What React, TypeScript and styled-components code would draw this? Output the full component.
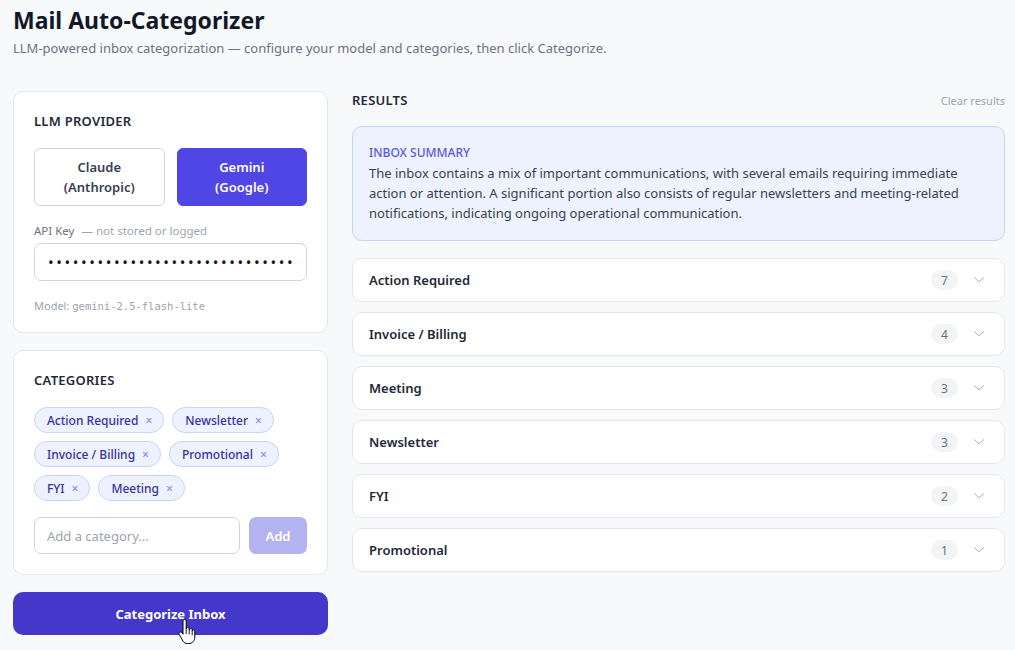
import { useState } from "react";
import styled, { createGlobalStyle } from "styled-components";

const GlobalStyle = createGlobalStyle`
  * { box-sizing: border-box; }
  html, body {
    margin: 0;
    padding: 0;
    background: #f8f9fb;
    font-family: "Noto Sans", "Open Sans", sans-serif;
    color: #111827;
  }
`;

const categories = [
  "Action Required",
  "Newsletter",
  "Invoice / Billing",
  "Promotional",
  "FYI",
  "Meeting",
];

const results = [
  { name: "Action Required", count: 7 },
  { name: "Invoice / Billing", count: 4 },
  { name: "Meeting", count: 3 },
  { name: "Newsletter", count: 3 },
  { name: "FYI", count: 2 },
  { name: "Promotional", count: 1 },
];

function Chevron() {
  return (
    <svg width="14" height="14" viewBox="0 0 24 24" fill="none" stroke="#9ca3af" strokeWidth="1.5" strokeLinecap="round" strokeLinejoin="round">
      <path d="M4 8l8 7 8-7" />
    </svg>
  );
}

// the mouse pointer resting on the primary button
function HandCursor() {
  return (
    <svg width="18" height="26" viewBox="0 0 18 26">
      <path
        d="M5 2.2c0-1 .8-1.7 1.6-1.7S8.2 1.2 8.2 2.2V10c0-.9.7-1.5 1.5-1.5s1.5.6 1.5 1.5v1c0-.9.7-1.5 1.5-1.5s1.5.6 1.5 1.5v1.2c0-.9.6-1.4 1.3-1.4s1.3.5 1.3 1.4v5.8c0 3.6-2.3 6.5-5.8 6.5H9.4c-2 0-3.3-.8-4.4-2.3L1.3 15.6c-.6-.8-.4-1.8.4-2.3.7-.5 1.6-.3 2.2.4L5 15.2z"
        fill="#fff"
        stroke="#000"
        strokeWidth="1"
        strokeLinejoin="round"
      />
      <path d="M8.2 10v5M11.2 11v4.5M14.2 12.2v4" stroke="#000" strokeWidth="0.9" />
    </svg>
  );
}

export default function App() {
  const [provider, setProvider] = useState<"claude" | "gemini">("gemini");

  return (
    <>
      <GlobalStyle />
      <Page>
        <Header>
          <h1>Mail Auto-Categorizer</h1>
          <p>LLM-powered inbox categorization — configure your model and categories, then click Categorize.</p>
        </Header>
        <Columns>
          <Sidebar>
            <Card $bottom={19}>
              <CardTitle>LLM Provider</CardTitle>
              <ProviderRow>
                <ProviderButton $active={provider === "claude"} onClick={() => setProvider("claude")}>
                  Claude<br />(Anthropic)
                </ProviderButton>
                <ProviderButton $active={provider === "gemini"} onClick={() => setProvider("gemini")}>
                  Gemini<br />(Google)
                </ProviderButton>
              </ProviderRow>
              <FieldLabel>
                API Key <span>— not stored or logged</span>
              </FieldLabel>
              <KeyInput type="password" defaultValue="AIzaSyD-9tSrke72PouQMnMX-a7eZSW0jkFMBWY" />
              <ModelNote>
                Model: <code>gemini-2.5-flash-lite</code>
              </ModelNote>
            </Card>
            <Card $bottom={20}>
              <CardTitle>Categories</CardTitle>
              <ChipList>
                {categories.map((c) => (
                  <Chip key={c}>
                    {c}
                    <ChipRemove>×</ChipRemove>
                  </Chip>
                ))}
              </ChipList>
              <AddRow>
                <TextInput placeholder="Add a category..." />
                <AddButton disabled>Add</AddButton>
              </AddRow>
            </Card>
            <PrimaryButton>
              Categorize Inbox
              <CursorSpot>
                <HandCursor />
              </CursorSpot>
            </PrimaryButton>
          </Sidebar>
          <Results>
            <ResultsHeader>
              <CardTitle as="h2">Results</CardTitle>
              <ClearLink>Clear results</ClearLink>
            </ResultsHeader>
            <Summary>
              <SummaryTitle>Inbox Summary</SummaryTitle>
              <SummaryText>
                The inbox contains a mix of important communications, with several emails requiring immediate
                action or attention. A significant portion also consists of regular newsletters and meeting-related
                notifications, indicating ongoing operational communication.
              </SummaryText>
            </Summary>
            {results.map((r) => (
              <ResultRow key={r.name}>
                <ResultName>{r.name}</ResultName>
                <CountBadge>{r.count}</CountBadge>
                <Chevron />
              </ResultRow>
            ))}
          </Results>
        </Columns>
      </Page>
    </>
  );
}

const Page = styled.div`
  padding: 6px 10px 16px 13px;
`;

const Header = styled.header`
  margin-bottom: 34px;

  h1 {
    margin: 0;
    font-size: 23px;
    font-weight: 700;
    line-height: 28px;
    color: #111827;
  }

  p {
    margin: 5px 0 0;
    font-size: 13px;
    color: #6b7280;
  }
`;

const Columns = styled.div`
  display: grid;
  grid-template-columns: 315px 1fr;
  gap: 24px;
  align-items: start;
`;

const Sidebar = styled.div`
  display: flex;
  flex-direction: column;
  gap: 17px;
`;

const Card = styled.section<{ $bottom?: number }>`
  background: #fff;
  border: 1px solid #e5e7eb;
  border-radius: 10px;
  padding: 20px 20px ${(p) => p.$bottom ?? 20}px;
`;

const CardTitle = styled.h3`
  margin: 0 0 18px;
  font-size: 13px;
  font-weight: 600;
  text-transform: uppercase;
  letter-spacing: 0.02em;
  color: #1f2937;
`;

const ProviderRow = styled.div`
  display: grid;
  grid-template-columns: 1fr 1fr;
  gap: 12px;
  margin-bottom: 17px;
`;

const ProviderButton = styled.button<{ $active: boolean }>`
  height: 58px;
  border-radius: 6px;
  font-family: inherit;
  font-size: 13px;
  line-height: 20px;
  font-weight: 600;
  cursor: pointer;
  border: 1px solid ${(p) => (p.$active ? "#4f46e5" : "#d1d5db")};
  background: ${(p) => (p.$active ? "#4f46e5" : "#fff")};
  color: ${(p) => (p.$active ? "#fff" : "#374151")};
`;

const FieldLabel = styled.div`
  font-size: 11.5px;
  color: #6b7280;
  margin-bottom: 5px;

  span {
    color: #9ca3af;
    margin-left: 4px;
  }
`;

const TextInput = styled.input`
  width: 100%;
  height: 38px;
  padding: 0 12px;
  border: 1px solid #d1d5db;
  border-radius: 7px;
  font-family: inherit;
  font-size: 13px;
  color: #111827;
  background: #fff;

  &::placeholder {
    color: #9ca3af;
  }
`;

const KeyInput = styled(TextInput)`
  padding: 0 12px 0 13px;
  font-size: 15px;
  letter-spacing: 2.6px;
  color: #0f172a;
`;

const ModelNote = styled.div`
  margin-top: 17px;
  font-size: 11px;
  color: #9ca3af;

  code {
    font-family: "DejaVu Sans Mono", "Liberation Mono", monospace;
    font-size: 10.5px;
  }
`;

const ChipList = styled.div`
  display: flex;
  flex-wrap: wrap;
  gap: 8px 8px;
  margin-bottom: 16px;
`;

const Chip = styled.span`
  display: inline-flex;
  align-items: center;
  gap: 7px;
  height: 26px;
  padding: 0 11px 0 12px;
  border-radius: 999px;
  background: #eef2ff;
  border: 1px solid #c7d2fe;
  color: #3730a3;
  font-size: 12px;
  font-weight: 500;
`;

const ChipRemove = styled.span`
  color: #818cf8;
  font-size: 12px;
`;

const AddRow = styled.div`
  display: flex;
  gap: 9px;

  input {
    height: 37px;
  }
`;

const AddButton = styled.button`
  flex: 0 0 58px;
  height: 37px;
  border: none;
  border-radius: 7px;
  background: #b4b3f2;
  color: #fff;
  font-family: inherit;
  font-size: 13px;
  font-weight: 600;
`;

const PrimaryButton = styled.button`
  position: relative;
  height: 43px;
  border: none;
  border-radius: 10px;
  background: #4338ca;
  color: #fff;
  font-family: inherit;
  font-size: 13px;
  font-weight: 700;
  cursor: pointer;
`;

const CursorSpot = styled.span`
  position: absolute;
  left: 165px;
  top: 27px;
  line-height: 0;
`;

const Results = styled.div`
  display: flex;
  flex-direction: column;
  gap: 10px;
`;

const ResultsHeader = styled.div`
  display: flex;
  justify-content: space-between;
  align-items: center;
  margin: 0 0 7px;

  h2 {
    margin: 0;
  }
`;

const ClearLink = styled.span`
  font-size: 11px;
  color: #9ca3af;
  cursor: pointer;
`;

const Summary = styled.div`
  background: #eef2ff;
  border: 1px solid #c7d2fe;
  border-radius: 10px;
  padding: 17px 16px 17px;
  margin-bottom: 7px;
`;

const SummaryTitle = styled.div`
  font-size: 12px;
  font-weight: 500;
  text-transform: uppercase;
  color: #5b57e0;
  margin-bottom: 2px;
`;

const SummaryText = styled.p`
  margin: 0;
  font-size: 13px;
  line-height: 20px;
  color: #374151;
`;

const ResultRow = styled.div`
  display: flex;
  align-items: center;
  height: 44px;
  padding: 0 18px 0 16px;
  background: #fff;
  border: 1px solid #e5e7eb;
  border-radius: 10px;
  gap: 14px;
`;

const ResultName = styled.span`
  flex: 1;
  font-size: 13px;
  font-weight: 600;
  color: #1f2937;
`;

const CountBadge = styled.span`
  min-width: 27px;
  height: 20px;
  padding: 0 8px;
  border-radius: 999px;
  background: #f3f4f6;
  color: #6b7280;
  font-size: 12px;
  display: inline-flex;
  align-items: center;
  justify-content: center;
`;
